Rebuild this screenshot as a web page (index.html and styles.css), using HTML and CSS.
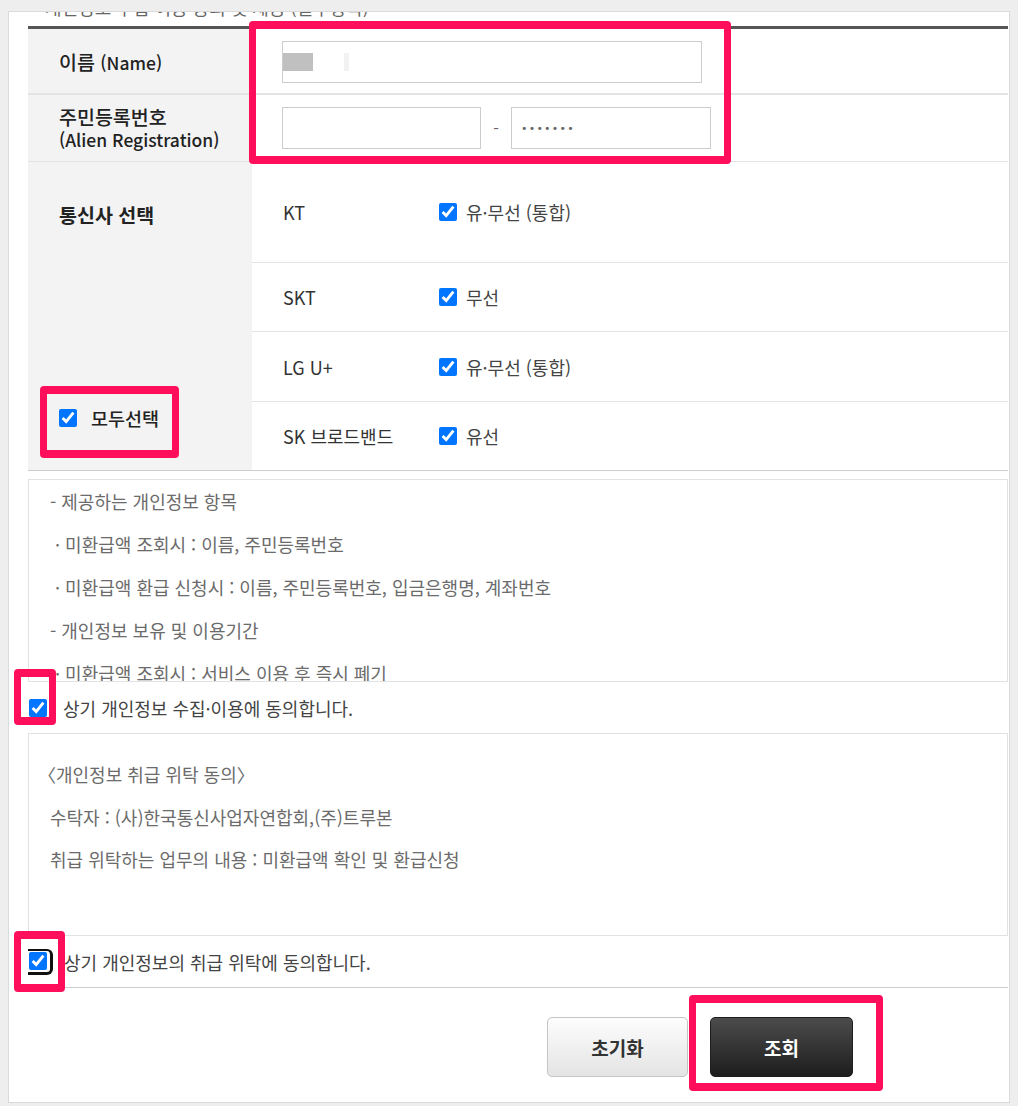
FILE: index.html
```html
<!DOCTYPE html>
<html lang="ko">
<head>
<meta charset="utf-8">
<title>미환급액 조회</title>
<link rel="stylesheet" href="styles.css">
</head>
<body>
<div class="panel">
  <div class="cut"><p class="cut-text">개인정보 수집·이용 동의 및 제공 (필수항목)</p></div>

  <div class="form">
    <div class="row row-name">
      <div class="th"><span>이름 <span class="latin">(Name)</span></span></div>
      <div class="td">
        <div class="input input-name"><span class="redact"></span><span class="redact redact-light"></span></div>
      </div>
    </div>
    <div class="row row-id">
      <div class="th"><span>주민등록번호<br><span class="latin">(Alien Registration)</span></span></div>
      <div class="td">
        <div class="input input-id1"></div>
        <span class="dash">-</span>
        <div class="input input-id2"><span class="dots">•••••••</span></div>
      </div>
    </div>
    <div class="row row-carrier">
      <div class="th th-carrier">
        <div class="th-title">통신사 선택</div>
        <label class="all"><input type="checkbox" checked><span>모두선택</span></label>
      </div>
      <div class="carriers">
        <div class="carrier c1"><span class="cname">KT</span><label class="opt"><input type="checkbox" checked><span>유·무선 (통합)</span></label></div>
        <div class="carrier c2"><span class="cname">SKT</span><label class="opt"><input type="checkbox" checked><span>무선</span></label></div>
        <div class="carrier c3"><span class="cname">LG U+</span><label class="opt"><input type="checkbox" checked><span>유·무선 (통합)</span></label></div>
        <div class="carrier c4"><span class="cname">SK 브로드밴드</span><label class="opt"><input type="checkbox" checked><span>유선</span></label></div>
      </div>
    </div>
  </div>

  <div class="terms terms-1">
    <p>- 제공하는 개인정보 항목</p>
    <p>&nbsp;· 미환급액 조회시 : 이름, 주민등록번호</p>
    <p>&nbsp;· 미환급액 환급 신청시 : 이름, 주민등록번호, 입금은행명, 계좌번호</p>
    <p>- 개인정보 보유 및 이용기간</p>
    <p>&nbsp;· 미환급액 조회시 : 서비스 이용 후 즉시 폐기</p>
    <p>&nbsp;· 미환급액 환급 신청시 : 환급 완료 후 즉시 폐기</p>
  </div>
  <label class="agree agree-1"><input type="checkbox" checked><span>상기 개인정보 수집·이용에 동의합니다.</span></label>

  <div class="terms terms-2">
    <p class="bracket">〈개인정보 취급 위탁 동의〉</p>
    <p>수탁자 : (사)한국통신사업자연합회,(주)트루본</p>
    <p>취급 위탁하는 업무의 내용 : 미환급액 확인 및 환급신청</p>
  </div>
  <label class="agree agree-2"><span class="focus"><input type="checkbox" checked></span><span>상기 개인정보의 취급 위탁에 동의합니다.</span></label>

  <div class="btns">
    <button class="btn btn-reset" type="button">초기화</button>
    <button class="btn btn-search" type="button">조회</button>
  </div>
</div>

<div class="mark mark-1"></div>
<div class="mark mark-2"></div>
<div class="mark mark-3"></div>
<div class="mark mark-4"></div>
<div class="mark mark-5"></div>
</body>
</html>
```

FILE: styles.css
```css
* { box-sizing: border-box; }

html, body { margin: 0; }

body {
  position: relative;
  height: 1106px;
  overflow: hidden;
  padding: 11px 0 0 0;
  background: #eeeeee;
  font-family: "Noto Sans CJK KR", "Noto Sans", sans-serif;
  color: #333;
}

.panel {
  margin: 0 0 0 8px;
  width: 1002px;
  height: 1092px;
  border: 1px solid #dadada;
  background: #fff;
  padding: 0 1px 0 19px;
  overflow: hidden;
}

.cut {
  height: 14px;
  overflow: hidden;
}

.cut-text {
  margin: -15px 0 0 17px;
  font-size: 18px;
  line-height: 20px;
  color: #666;
}

/* form table */
.form {
  border-top: 3px solid #555;
}

.row {
  display: grid;
  grid-template-columns: 224px 1fr;
}

.th {
  background: #f3f3f3;
  padding-left: 31px;
  font-size: 19.5px;
  font-weight: 500;
  color: #222;
  display: flex;
  align-items: center;
}

.latin {
  font-size: 17.5px;
}

.td {
  display: flex;
  align-items: center;
  padding-left: 30px;
}

.row-name {
  height: 66px;
  border-bottom: 2px solid #e4e4e4;
}

.row-name .td { padding-top: 2px; }

.row-id {
  height: 67px;
  border-bottom: 1px solid #e4e4e4;
}

.row-id .th {
  line-height: 22px;
}

.input {
  height: 42px;
  border: 1px solid #cccccc;
  background: #fff;
  display: flex;
  align-items: center;
}

.input-name { width: 420px; }
.input-id1 { width: 199px; }
.input-id2 { width: 200px; padding-left: 9px; }

.redact {
  display: block;
  width: 30px;
  height: 18px;
  background: #c0c0c0;
}

.redact-light {
  width: 5px;
  margin-left: 31px;
  background: #f2f2f2;
}

.dash {
  width: 30px;
  text-align: center;
  font-size: 16px;
  color: #666;
}

.dots {
  font-family: "DejaVu Sans", sans-serif;
  font-size: 11px;
  letter-spacing: 1.2px;
  color: #666;
}

/* carriers */
.row-carrier {
  height: 309px;
  border-bottom: 1px solid #cccccc;
}

.th-carrier {
  flex-direction: column;
  align-items: flex-start;
  justify-content: space-between;
  padding-top: 40px;
  padding-bottom: 43px;
}

.th-title {
  line-height: 26px;
  font-weight: 700;
}

.all {
  display: flex;
  align-items: center;
  height: 18px;
  font-size: 18.5px;
  font-weight: 500;
  color: #222;
}

.all span { margin-left: 14px; }

input[type="checkbox"] {
  width: 18px;
  height: 18px;
  margin: 0;
  accent-color: #0075ff;
}

.carriers {
  display: flex;
  flex-direction: column;
}

.carrier {
  display: flex;
  align-items: center;
  padding-left: 31px;
  font-size: 18px;
}

.c1 { height: 101px; border-bottom: 1px solid #e4e4e4; }
.c2 { height: 69px; border-bottom: 1px solid #e4e4e4; }
.c3 { height: 70px; border-bottom: 1px solid #e4e4e4; }
.c4 { height: 68px; }

.cname {
  width: 156px;
  color: #333;
}

.opt {
  display: flex;
  align-items: center;
  color: #444;
}

.opt span { margin-left: 9px; }

/* terms */
.terms {
  height: 203px;
  border: 1px solid #e2e2e2;
  overflow: hidden;
  padding-left: 21px;
  font-size: 18px;
  line-height: 43px;
  color: #6b6b6b;
}

.terms p { margin: 0; white-space: pre; }

.terms-1 { margin-top: 8px; }

.terms-2 {
  padding-top: 19px;
  line-height: 42.5px;
}

.terms-2 .bracket { margin-left: -12px; }

.agree {
  display: flex;
  align-items: center;
  height: 51px;
  padding-left: 1px;
  font-size: 18px;
  color: #444;
}

.agree-1 span { margin-left: 16px; }

.agree-2 {
  height: 52px;
  padding-left: 0;
  border-bottom: 1px solid #cccccc;
}

.focus {
  display: flex;
  border: 2px solid #111;
  border-left: none;
  border-width: 2px 3px 3px 0;
  border-radius: 0 6px 6px 0;
  padding: 1px 3px 2px 1px;
}

.agree-2 > span:last-child { margin-left: 11px; }

/* buttons */
.btns {
  display: flex;
  gap: 22px;
  padding-left: 519px;
  margin-top: 29px;
}

.btn {
  height: 60px;
  border-radius: 5px;
  font-family: "Noto Sans CJK KR", "Noto Sans", sans-serif;
  font-size: 19px;
  font-weight: 700;
  padding: 0;
}

.btn-reset {
  width: 141px;
  background: linear-gradient(#fdfdfd, #e4e4e4);
  border: 1px solid #c4c4c4;
  color: #333;
}

.btn-search {
  width: 143px;
  background: linear-gradient(#4c4c4c, #1d1d1d);
  border: 1px solid #1e1e1e;
  color: #fff;
}

/* annotation marks */
.mark {
  position: absolute;
  border: 8px solid #ff0f5b;
  border-left-width: 7px;
  border-right-width: 7px;
  border-radius: 4px;
}

.mark-1 { left: 249px; top: 21px; width: 482px; height: 143px; }
.mark-2 { left: 40px; top: 386px; width: 139px; height: 72px; }
.mark-3 { left: 14px; top: 669px; width: 42px; height: 56px; }
.mark-4 { left: 14px; top: 931px; width: 51px; height: 61px; }
.mark-5 { left: 689px; top: 995px; width: 194px; height: 96px; }
```
